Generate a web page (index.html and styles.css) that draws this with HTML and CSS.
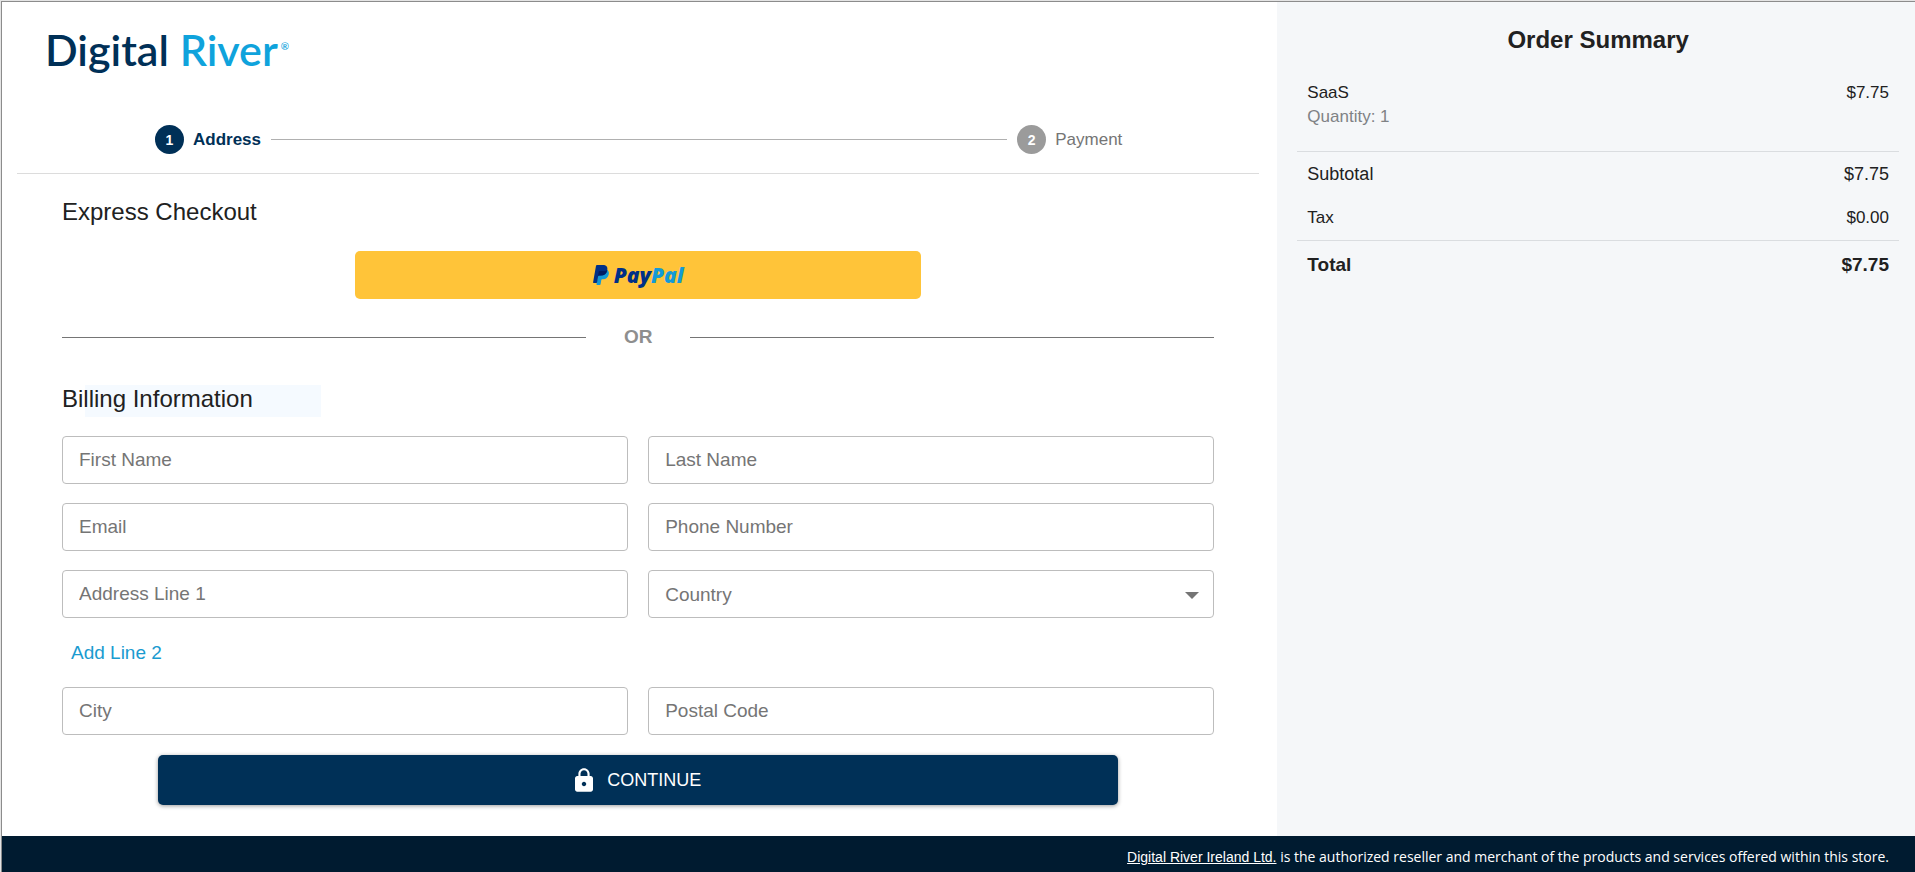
FILE: index.html
```html
<!DOCTYPE html>
<html lang="en">
<head>
<meta charset="utf-8">
<title>Digital River Checkout</title>
<link rel="stylesheet" href="styles.css">
</head>
<body>
<div class="page">
  <div class="columns">
    <main class="checkout">
      <header class="brand" aria-label="Digital River"><span class="brand-digital">Digital</span> <span class="brand-river">River</span><span class="brand-mark">®</span></header>
      <ol class="stepper">
        <li class="step step-active"><span class="step-number">1</span><span>Address</span></li>
        <li class="step-line" aria-hidden="true"></li>
        <li class="step"><span class="step-number">2</span><span>Payment</span></li>
      </ol>
      <div class="content">
        <h2 class="title">Express Checkout</h2>
        <button class="paypal" type="button" aria-label="PayPal">
          <svg class="paypal-icon" viewBox="0 0 16 20" aria-hidden="true">
            <path fill="#139ad6" d="M13.600 4.600c2 1 2.600 2.700 2.100 5-.7 3.200-2.700 4.700-5.700 4.700h-.9c-.4 0-.7.3-.8.700l-.7 4.200c-.1.500-.4.800-.8.800H4c-.4 0-.6-.3-.5-.7L5 9z"/>
            <path fill="#003087" d="M3 .8C3.100.3 3.500 0 4 0h5.800c3.400 0 5.100 1.700 4.500 5-.7 3.700-3 5.500-6.600 5.500H6c-.5 0-.8.3-.9.800L4.100 17.300c-.1.400-.3.700-.7.700H.6c-.4 0-.6-.3-.5-.800z"/>
            <path fill="#001c64" d="M14.300 5c-.7 3.700-3 5.500-6.600 5.500H6c-.5 0-.8.3-.9.800l-.5 3L5.700 6.800c.1-.5.400-.8.900-.8h4c1.600 0 2.800-.4 3.700-1z"/>
          </svg>
          <span class="paypal-word"><span class="paypal-pay">Pay</span><span class="paypal-pal">Pal</span></span>
        </button>
        <div class="separator"><span>OR</span></div>
        <h2 class="title title-billing">Billing Information</h2>
        <form class="billing">
          <div class="fields">
            <input class="field" type="text" placeholder="First Name" aria-label="First Name">
            <input class="field" type="text" placeholder="Last Name" aria-label="Last Name">
            <input class="field" type="email" placeholder="Email" aria-label="Email">
            <input class="field" type="tel" placeholder="Phone Number" aria-label="Phone Number">
            <input class="field" type="text" placeholder="Address Line 1" aria-label="Address Line 1">
            <div class="select">
              <select class="field" aria-label="Country"><option>Country</option></select>
              <svg class="select-arrow" viewBox="0 0 14 7" aria-hidden="true"><path d="M0 0h14L7 7z"/></svg>
            </div>
          </div>
          <button class="add-line" type="button">Add Line 2</button>
          <div class="fields">
            <input class="field" type="text" placeholder="City" aria-label="City">
            <input class="field" type="text" placeholder="Postal Code" aria-label="Postal Code">
          </div>
          <button class="continue" type="button">
            <svg class="lock" viewBox="4 1 16 21" aria-hidden="true"><path d="M18 8h-1V6c0-2.760-2.240-5-5-5S7 3.240 7 6v2H6c-1.100 0-2 .9-2 2v10c0 1.100.9 2 2 2h12c1.100 0 2-.9 2-2V10c0-1.100-.9-2-2-2zm-6 9c-1.100 0-2-.9-2-2s.9-2 2-2 2 .9 2 2-.9 2-2 2zm3.100-9H8.900V6c0-1.710 1.390-3.100 3.100-3.100s3.100 1.390 3.100 3.100v2z"/></svg>
            <span>CONTINUE</span>
          </button>
        </form>
      </div>
    </main>
    <aside class="summary">
      <h2 class="summary-title">Order Summary</h2>
      <div class="item">
        <div class="row"><span>SaaS</span><span>$7.75</span></div>
        <div class="quantity">Quantity: 1</div>
      </div>
      <div class="amounts">
        <div class="row row-subtotal"><span>Subtotal</span><span>$7.75</span></div>
        <div class="row"><span>Tax</span><span>$0.00</span></div>
      </div>
      <div class="row row-total"><span>Total</span><span>$7.75</span></div>
    </aside>
  </div>
  <footer class="footer"><a class="footer-link" href="#">Digital River Ireland Ltd.</a> is the authorized reseller and merchant of the products and services offered within this store.</footer>
</div>
</body>
</html>
```
FILE: styles.css
```css
* { box-sizing: border-box; }

html { background: #e4e4e4; }

body {
  margin: 0;
  padding: 1px 0 0 1px;
  font-family: "Liberation Sans", Arial, sans-serif;
  font-size: 17px;
  color: #212121;
}

button, input, select { font-family: inherit; }

.page {
  display: flex;
  flex-direction: column;
  min-height: calc(100vh - 1px);
  border-top: 1px solid #8c8c8c;
  border-left: 1px solid #8c8c8c;
  background: #fff;
}

.columns {
  flex: 1;
  display: grid;
  grid-template-columns: 2fr 1fr;
}

/* Brand */
.brand {
  padding: 19px 0 0 43px;
  font-family: Lato, sans-serif;
  font-size: 43px;
  line-height: 50px;
  font-weight: 600;
}
.brand-digital { color: #003057; }
.brand-river { color: #0fa3dc; }
.brand-mark {
  font-size: 10px;
  color: #0fa3dc;
  vertical-align: 16px;
  margin-left: 3px;
}

/* Stepper */
.stepper {
  display: flex;
  align-items: center;
  gap: 10px;
  list-style: none;
  margin: 50px 18px 0 15px;
  padding: 0 137px 19px 138px;
  border-bottom: 1px solid #dcdcdc;
}
.step {
  display: flex;
  align-items: center;
  gap: 9px;
  color: #757575;
}
.step-active { color: #003057; font-weight: bold; }
.step-number {
  display: flex;
  align-items: center;
  justify-content: center;
  width: 29px;
  height: 29px;
  border-radius: 50%;
  background: #9b9b9b;
  color: #fff;
  font-size: 14px;
  font-weight: bold;
}
.step-active .step-number { background: #003057; }
.step-line { flex: 1; height: 1px; background: #b0b0b0; }

/* Form column */
.content { padding: 24px 63px 31px 60px; }
.title {
  margin: 0;
  font-size: 24px;
  line-height: 28px;
  font-weight: normal;
}
.title-billing {
  width: 259px;
  padding-bottom: 4px;
  margin-bottom: 19px;
  background: linear-gradient(to right, transparent 23px, #f5faff 23px);
}
.paypal {
  display: flex;
  align-items: center;
  justify-content: center;
  gap: 5px;
  width: 566px;
  max-width: 100%;
  height: 48px;
  margin: 25px auto 0;
  padding: 0;
  border: 0;
  border-radius: 5px;
  background: #ffc439;
}
.paypal-icon { width: 16px; height: 20px; }
.paypal-word {
  font-family: "Open Sans", sans-serif;
  font-size: 21px;
  font-weight: 800;
  font-style: italic;
  line-height: 24px;
}
.paypal-pay { color: #003087; }
.paypal-pal { color: #139ad6; }

.separator {
  display: flex;
  align-items: center;
  gap: 38px;
  margin: 27px 0 37px;
  font-size: 19px;
  line-height: 22px;
  font-weight: bold;
  color: #8e8e8e;
}
.separator::before, .separator::after {
  content: "";
  flex: 1;
  height: 1px;
  background: #757575;
}

.fields {
  display: grid;
  grid-template-columns: 1fr 1fr;
  gap: 19px 20px;
}
.field {
  width: 100%;
  height: 48px;
  padding: 0 16px;
  border: 1px solid #bdbdbd;
  border-radius: 4px;
  background: #fff;
  font-size: 19px;
  color: #757575;
  appearance: none;
}
.field::placeholder { color: #757575; opacity: 1; }
.select { position: relative; }
.select-arrow {
  position: absolute;
  right: 15px;
  top: 22px;
  width: 14px;
  height: 7px;
  fill: #757575;
  pointer-events: none;
}
.add-line {
  display: block;
  margin: 23px 0;
  padding: 0 9px;
  border: 0;
  background: none;
  font-size: 19px;
  line-height: 23px;
  color: #1a9bd0;
}
.continue {
  display: flex;
  align-items: center;
  justify-content: center;
  gap: 14px;
  width: 960px;
  max-width: 100%;
  height: 50px;
  margin: 20px auto 0;
  padding: 0;
  border: 0;
  border-radius: 5px;
  background: #003057;
  box-shadow: 0 1px 4px rgba(0, 0, 0, 0.4);
  color: #fff;
  font-size: 18px;
}
.lock { width: 18px; height: 24px; fill: #fff; }

/* Order summary */
.summary {
  padding: 24px 16px 24px 20px;
  background: #f5f7f9;
}
.summary-title {
  margin: 0 0 27px;
  font-size: 24px;
  line-height: 28px;
  text-align: center;
}
.row {
  display: flex;
  justify-content: space-between;
  padding: 0 10px;
  line-height: 24px;
}
.item { padding-bottom: 22px; border-bottom: 1px solid #dadde0; }
.quantity { padding: 0 10px; line-height: 24px; color: #808285; }
.amounts {
  display: grid;
  gap: 20px;
  padding: 10px 0;
  border-bottom: 1px solid #dadde0;
}
.row-subtotal { font-size: 18px; }
.row-total { padding-top: 12px; font-size: 19px; font-weight: bold; }

/* Footer */
.footer {
  padding: 12px 26px 6px;
  background: #001b30;
  color: #fff;
  font-family: "Open Sans", sans-serif;
  font-size: 14px;
  line-height: 18px;
  text-align: right;
}
.footer-link { font-family: "Liberation Sans", Arial, sans-serif; color: #fff; }
```
